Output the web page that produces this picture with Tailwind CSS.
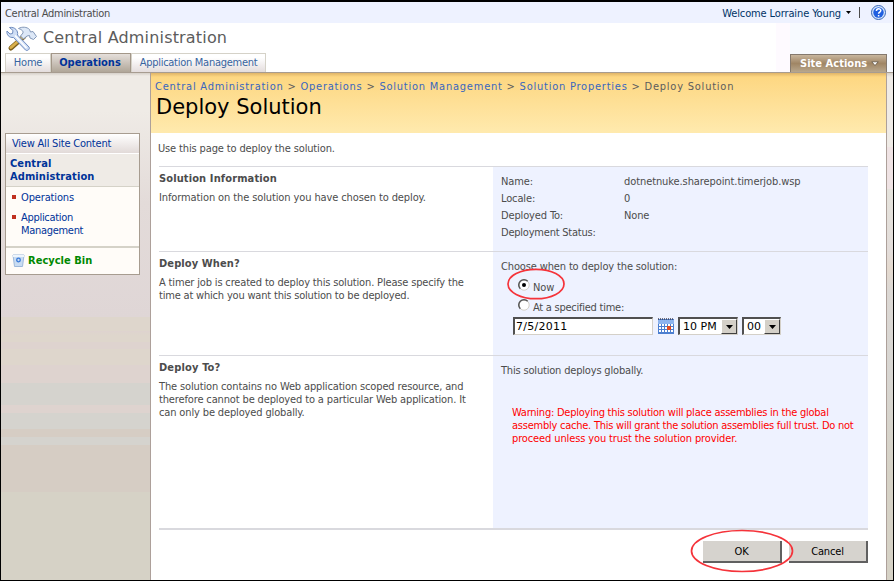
<!DOCTYPE html>
<html lang="en"><head><meta charset="utf-8"><title>Deploy Solution</title>
<script src="https://cdn.jsdelivr.net/npm/@tailwindcss/browser@4"></script></head>
<body class="w-[894px] h-[581px] overflow-hidden bg-white">
<div class="relative flex h-[581px] w-[894px] flex-col border border-t-2 border-black font-['DejaVu_Sans_Condensed','DejaVu_Sans',sans-serif] text-[11px] leading-[13px] tracking-[-0.14px] text-[#4c4c4c] whitespace-nowrap">
  <!-- Global bar -->
  <div class="flex h-[21px] shrink-0 items-center justify-between bg-[#eef2ff] pl-[4px] pr-[6px]">
    <span class="pt-px tracking-[-0.3px]">Central Administration</span>
    <div class="flex items-center text-[#003366]">
      <span class="pt-px tracking-[-0.12px]">Welcome Lorraine Young</span>
      <svg class="ml-[5px] h-[3px] w-[5px]" viewBox="0 0 5 3"><path d="M0 0h5L2.5 3z" fill="#000"/></svg>
      <span class="ml-[8px] h-[11px] w-px bg-[#4c4c4c]"></span>
      <svg class="ml-[11px] mr-px size-[15px]" viewBox="0 0 15 15"><circle cx="7.5" cy="7.5" r="7" fill="#d5e6fb" stroke="#3a66b4"/><circle cx="7.5" cy="7.5" r="5.2" fill="#1f5fe0"/><path d="M5.4 6c0-3 4.400-2.800 4.400-.4 0 1.500-2.200 1.500-2.200 3.200M7.600 10v1.500" stroke="#fff" stroke-width="1.500" fill="none"/></svg>
    </div>
  </div>
  <!-- Site title and tabs -->
  <div class="flex h-[49px] shrink-0 justify-between">
    <div class="flex flex-col">
      <div class="flex h-[30px] items-center gap-[6px] pl-[5px]">
        <svg class="mt-[1px] h-[26px] w-[31px]" viewBox="0 0 31 26">
          <path d="M5 22L18 10.500" stroke="#7d5f1c" stroke-width="5" stroke-linecap="round"/>
          <path d="M5 21.500L18 10" stroke="#d9b04c" stroke-width="3" stroke-linecap="round"/>
          <path d="M12.500 2.500C16 .5 21 .8 23.500 3.500l1 2.500 2.500-.5 3.500 5-3 3-3.500-1.500-.5-2.500-2.500.5-3.500 3-3-3 2.500-3C17.500 4.500 15 3.500 12.500 2.500z" fill="#dde8f7" stroke="#8297b8"/>
          <path d="M3.500 1.500L7 4.500 6.500 7.500 4 8 1 5C.3 8.500 3 12 7.500 11.500L19.500 24c1.500 1.500 5-.8 3.500-3L11.500 9C12.500 5 9 .5 3.500 1.500z" fill="#cfdef5" stroke="#6f8cbf"/>
          <path d="M9 9.500L20.500 22" stroke="#fff" stroke-width="1.500"/>
        </svg>
        <h2 class="font-['DejaVu_Sans'] text-[16px] leading-[20px] tracking-[0.17px] text-[#5c5c5c]">Central Administration</h2>
      </div>
      <nav class="flex h-[19px] pl-[4px] text-[#3764a0]">
        <a class="flex w-[46px] items-center justify-center border border-b-0 border-[#d5d2c8] bg-linear-to-b from-white from-20% to-[#e4dddd] pb-[2px] tracking-[-0.2px]">Home</a>
        <a class="flex w-[80px] items-center justify-center border border-b-0 border-[#a39789] bg-linear-to-b from-[#e5dfdb] to-[#b0a698] pb-[2px] pr-[2px] font-bold tracking-normal text-[#003399]">Operations</a>
        <a class="flex w-[135px] items-center justify-center border border-b-0 border-[#d5d2c8] bg-linear-to-b from-white from-20% to-[#e4dddd] pb-[2px] tracking-[-0.27px]">Application Management</a>
      </nav>
    </div>
    <div class="flex w-[103px] shrink-0 items-end bg-[#f7faff] shadow-[-14px_0_0_#fefaff]">
      <div class="flex h-[18px] w-[97px] items-center gap-[4px] border border-b-0 border-[#84796e] bg-linear-to-b from-[#c8b69e] via-[#a08665] to-[#b8a78d] pl-[9px] font-bold tracking-[0.03px] text-white"><span>Site Actions</span><svg class="h-[6px] w-[8px]" viewBox="0 0 8 6"><path d="M.8.8h6.400L4 4.500z" fill="#fff" stroke="#55493a" stroke-width=".7"/></svg></div>
    </div>
  </div>
  <!-- Body -->
  <div class="flex min-h-0 flex-1 border-t border-[#a79c90]">
    <aside class="w-[149px] shrink-0 bg-[linear-gradient(180deg,#d6d0c9_0,#efebe6_3px,#efebe6_38px,#e3dbd9_130px,#dfd6d6_244px,#ded6cc_244px,#ded6cc_258px,#ded3cf_258px,#ded6cc_262px,#ded6cc_269px,#ded3cf_269px,#ded3cf_276px,#ded6cc_276px,#ded6cc_292px,#ded3cf_292px,#ded3cf_310px,#d5d3ce_310px,#d5d3ce_332px,#ded3cf_332px,#ded3cf_340px,#d5d3ce_340px,#d5d3ce_356px,#d6cdc4_356px,#d6cdc4_364px,#d5d3ce_364px,#d5d3ce_372px,#d6cdc4_372px,#d6cdc4_419px,#d6d2c6_419px)] pl-[4px] pt-[60px]">
      <div class="w-[135px] border border-[#a79c90] bg-[#fffcf8] text-[#003399]">
        <div class="h-[20px] border-b border-white bg-linear-to-b from-white to-[#e2dad8] pl-[6px] pt-[3px] tracking-[-0.21px]">View All Site Content</div>
        <div class="h-[33px] border-b border-[#d5d2c8] bg-[#efebe6] pl-[4px] pt-[3px] font-bold tracking-[0.1px]">Central<br>Administration</div>
        <ul class="h-[59px] pt-[4px] tracking-[-0.14px]">
          <li class="flex gap-[5px] pl-[6px]"><i class="mt-[4px] size-[4px] bg-[#c03020]"></i><span>Operations</span></li>
          <li class="mt-[7px] flex gap-[5px] pl-[6px]"><i class="mt-[4px] size-[4px] bg-[#c03020]"></i><span class="tracking-[-0.3px]">Application<br>Management</span></li>
        </ul>
        <div class="flex h-[28px] items-center gap-[3px] border-t-2 border-[#d5d2c8] pb-px pl-[6px] font-bold tracking-[0.02px] text-[#008800]"><svg class="h-[13px] w-[13px]" viewBox="0 0 13 13"><path d="M1 1h11l-1.500 11.500h-8z" fill="#c9dcf2" stroke="#9db8da"/><path d="M1 1h11v2H1z" fill="#eef5fc"/><circle cx="6.500" cy="6" r="1.800" fill="none" stroke="#3a7ad8" stroke-width="1.300"/></svg><span>Recycle Bin</span></div>
      </div>
    </aside>
    <main class="w-[737px] shrink-0 border-x border-[#ada09a] bg-white">
      <header class="h-[60px] bg-[linear-gradient(180deg,#dfb468_0,#fdd782_4px,#ffeaae_100%)] pl-[4px] pt-[7px]">
        <div class="leading-[14px] tracking-[0.77px] text-[#5c5c5c]"><span class="text-[#3966bf]">Central Administration</span> &gt; <span class="text-[#3966bf]">Operations</span> &gt; <span class="text-[#3966bf]">Solution Management</span> &gt; <span class="text-[#3966bf]">Solution Properties</span> &gt; Deploy Solution</div>
        <h1 class="pl-px font-['DejaVu_Sans'] text-[21px] leading-[26px] tracking-normal text-black">Deploy Solution</h1>
      </header>
      <div class="pl-[8px] pr-[18px]">
        <p class="-ml-px h-[33px] pt-[9px]">Use this page to deploy the solution.</p>
        <section class="flex h-[85px] border-t border-[#d9d9de]">
          <div class="w-[334px] shrink-0 pt-[5px]"><h3 class="font-bold tracking-[0.12px]">Solution Information</h3><p class="mt-[6px] tracking-[-0.11px]">Information on the solution you have chosen to deploy.</p></div>
          <dl class="grid flex-1 grid-cols-[123px_1fr] auto-rows-[17px] bg-[#eef2ff] pl-[8px] pt-[8px]"><dt>Name:</dt><dd class="tracking-[-0.09px]">dotnetnuke.sharepoint.timerjob.wsp</dd><dt>Locale:</dt><dd>0</dd><dt>Deployed To:</dt><dd>None</dd><dt class="tracking-[-0.22px]">Deployment Status:</dt></dl>
        </section>
        <section class="flex h-[104px] border-t border-[#d9d9de]">
          <div class="w-[334px] shrink-0 pt-[5px]"><h3 class="font-bold tracking-[0.1px]">Deploy When?</h3><p class="mt-[6px] tracking-[-0.16px]">A timer job is created to deploy this solution. Please specify the<br><span class="tracking-[-0.19px]">time at which you want this solution to be deployed.</span></p></div>
          <div class="flex-1 bg-[#eef2ff] pl-[8px] pt-[8px]"><p>Choose when to deploy the solution:</p>
            <div class="relative mt-[6px] flex h-[20px] gap-[3px] pl-[17px]"><svg class="h-[12px] w-[12px]" viewBox="0 0 12 12"><circle cx="6" cy="6" r="5.200" fill="#fff" stroke="#d4d0c8"/><path d="M2.300 9.700A5.200 5.200 0 0 1 9.700 2.300" fill="none" stroke="#555" stroke-width="1.500"/><circle cx="6" cy="6" r="2" fill="#000"/></svg><span class="mt-[2px]">Now</span>
              <svg class="absolute left-[5px] top-[-12px] h-[34px] w-[60px]" viewBox="0 0 60 34"><ellipse cx="30" cy="17" rx="28" ry="14.700" fill="none" stroke="#f5333a" stroke-width="1.700"/></svg></div>
            <div class="flex h-[18px] gap-[3px] pl-[17px]"><svg class="h-[12px] w-[12px]" viewBox="0 0 12 12"><circle cx="6" cy="6" r="5.200" fill="#fff" stroke="#d4d0c8"/><path d="M2.300 9.700A5.200 5.200 0 0 1 9.700 2.300" fill="none" stroke="#555" stroke-width="1.500"/></svg><span class="mt-[2px] tracking-[-0.25px]">At a specified time:</span></div>
            <div class="flex h-[18px] items-center pl-[12px] tracking-normal text-black">
              <div class="h-[18px] w-[140px] border border-l-2 border-t-2 border-[#d4d0c8] border-l-[#505050] border-t-[#505050] bg-white pl-px pt-px font-['DejaVu_Sans'] tracking-[0.25px]">7/5/2011</div>
              <svg class="ml-[5px] h-[16px] w-[16px]" viewBox="0 0 16 16"><path d="M0 1h16v15H0z" fill="#4c7fd0"/><path d="M0 2h16v4H0z" fill="#8db4ee"/><path d="M0 1h16" stroke="#445" stroke-width="1.500" stroke-dasharray="1 1"/><g fill="#fff"><path d="M1 6h2v2H1zM4 6h2v2H4zM7 6h2v2H7zM10 6h2v2h-2zM13 6h2v2h-2zM1 9h2v2H1zM4 9h2v2H4zM7 9h2v2H7zM13 9h2v2h-2zM1 12h2v2H1zM4 12h2v2H4zM7 12h2v2H7zM10 12h2v2h-2zM13 12h2v2h-2z"/></g><path d="M9 8h4v4H9z" fill="#e04a20"/></svg>
              <div class="ml-[4px] flex h-[18px] w-[60px] border border-l-2 border-t-2 border-[#d4d0c8] border-l-[#505050] border-t-[#505050] bg-white pl-[3px]"><span class="flex-1 pt-px font-['DejaVu_Sans']">10 PM</span><span class="flex h-[15px] w-[16px] items-center justify-center border border-b-[#404040] border-r-[#404040] border-l-white border-t-white bg-[#d4d0c8]"><svg class="h-[4px] w-[7px]" viewBox="0 0 7 4"><path d="M0 0h7L3.500 4z"/></svg></span></div>
              <div class="ml-[4px] flex h-[18px] w-[39px] border border-l-2 border-t-2 border-[#d4d0c8] border-l-[#505050] border-t-[#505050] bg-white pl-[3px]"><span class="flex-1 pt-px font-['DejaVu_Sans']">00</span><span class="flex h-[15px] w-[16px] items-center justify-center border border-b-[#404040] border-r-[#404040] border-l-white border-t-white bg-[#d4d0c8]"><svg class="h-[4px] w-[7px]" viewBox="0 0 7 4"><path d="M0 0h7L3.500 4z"/></svg></span></div>
            </div></div>
        </section>
        <section class="flex h-[175px] border-b-2 border-t border-[#d9d9de]">
          <div class="w-[334px] shrink-0 pt-[5px]"><h3 class="font-bold tracking-[0.15px]">Deploy To?</h3><p class="mt-[6px] tracking-[-0.14px]">The solution contains no Web application scoped resource, and<br>therefore cannot be deployed to a particular Web application. It<br>can only be deployed globally.</p></div>
          <div class="min-w-0 flex-1 bg-[#eef2ff] pl-[8px] pt-[8px]"><p class="tracking-[-0.18px]">This solution deploys globally.</p><p class="mt-[29px] pl-[11px] tracking-[-0.24px] text-[#ff0000]">Warning: Deploying this solution will place assemblies in the global<br>assembly cache. This will grant the solution assemblies full trust. Do not<br><span class="tracking-[-0.12px]">proceed unless you trust the solution provider.</span></p></div>
        </section>
        <div class="relative mt-[11px] flex justify-end gap-[7px] text-black">
          <button class="h-[22px] w-[79px] border-b-2 border-r-2 border-[#606060] bg-[#d6d3ce]">OK</button>
          <button class="h-[22px] w-[79px] border-b-2 border-r-2 border-[#606060] bg-[#d6d3ce]">Cancel</button>
          <svg class="absolute right-[74px] top-[-12px] h-[44px] w-[104px]" viewBox="0 0 104 44"><ellipse cx="52" cy="22" rx="50.500" ry="20.500" fill="none" stroke="#f5333a" stroke-width="1.700"/></svg>
        </div>
      </div>
    </main>
    <div class="flex-1 bg-[linear-gradient(180deg,#d6d0c9_0,#efebe6_4px,#efebe6_74px,#efe3e4_74px,#efe3e4_116px,#e5e3dc_116px,#e3ddda_178px,#e5dacf_195px,#dcd8d4_217px,#d8d6d2_300px,#d6d2c6_400px)]"></div>
  </div>
</div>
</body></html>
